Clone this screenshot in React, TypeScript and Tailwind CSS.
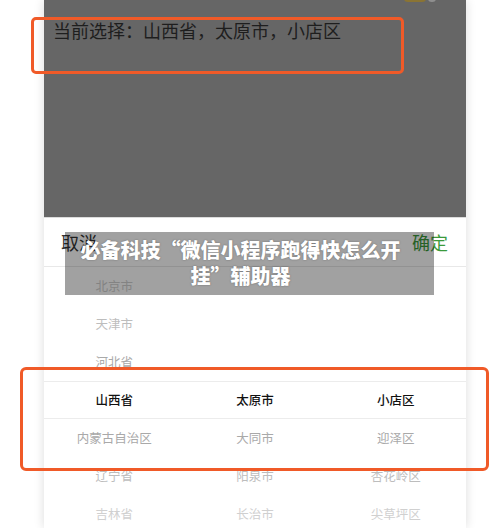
import React from "react";

const provinces = ["北京市", "天津市", "河北省", "山西省", "内蒙古自治区", "辽宁省", "吉林省"];
const cities = ["", "", "", "太原市", "大同市", "阳泉市", "长治市"];
const districts = ["", "", "", "小店区", "迎泽区", "杏花岭区", "尖草坪区"];

// colour by distance from the selected row
const tone = ["text-[#111] font-medium", "text-[#a9a9a9]", "text-[#bdbdbd]", "text-[#d0d0d0]"];

function Column({ items }: { items: string[] }) {
  return (
    <div className="flex-1 flex flex-col">
      {items.map((item, i) => (
        <div key={i} className={`h-[38px] shrink-0 flex items-center justify-center text-[12.5px] ${tone[Math.abs(i - 3)]}`}>
          {item}
        </div>
      ))}
    </div>
  );
}

export default function App() {
  return (
    <div className="relative w-[500px] h-[528px] overflow-hidden bg-white" style={{ fontFamily: '"Noto Sans CJK SC", "Noto Sans", sans-serif' }}>
      <div className="ml-[44px] w-[422px] h-full flex flex-col shadow-[0_0_10px_rgba(0,0,0,0.14)]">
        <div className="relative shrink-0 h-[217px] bg-[#666666] px-[9px] pt-[17px]">
          <div className="absolute right-[40px] -top-[5px] w-[22px] h-[7px] rounded-full bg-[#8a7434]" />
          <div className="absolute right-[30px] -top-[5px] w-[8px] h-[7px] rounded-full bg-[#8f8f8f]" />
          <div className="text-[18px] leading-[26px] text-[#1e1e1e]">当前选择：山西省，太原市，小店区</div>
        </div>
        <div className="shrink-0 bg-white border-t border-[#dcdcdc]">
          <div className="h-[49px] flex items-center justify-between pl-[17px] pr-[18px] border-b border-[#e8e8e8]">
            <span className="text-[18px] text-[#333]">取消</span>
            <span className="text-[18px] text-[#3b9a3b]">确定</span>
          </div>
          <div className="relative flex">
            <div className="absolute left-0 right-0 top-[114px] h-[38px] border-t border-b border-[#ececec]" />
            <Column items={provinces} />
            <Column items={cities} />
            <Column items={districts} />
          </div>
        </div>
      </div>

      <div className="absolute left-[31px] top-[17px] w-[373px] h-[57px] rounded-[5px] border-[3px] border-[#f05a28]" />
      <div className="absolute left-[20px] top-[367px] w-[469px] h-[104px] rounded-[6px] border-[3px] border-[#f05a28]" />

      <div className="absolute left-[65px] top-[232px] w-[369px] h-[63px] bg-[rgba(0,0,0,0.37)] pl-[10px] pr-[28px] pt-[5px]">
        <div className="text-center text-white font-black text-[20px] leading-[26px] [text-shadow:0_0_2px_rgba(0,0,0,0.35)]">
          必备科技“微信小程序跑得快怎么开挂”辅助器
        </div>
      </div>
    </div>
  );
}
